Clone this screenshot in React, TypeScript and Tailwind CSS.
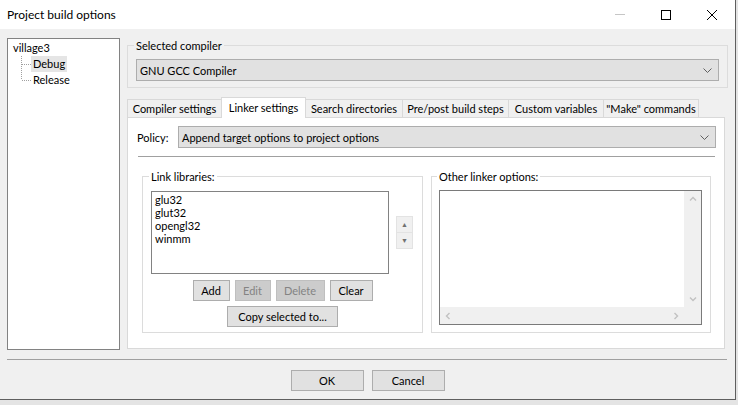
import React from 'react'

const tabs = [
  { label: 'Compiler settings', w: 'w-[95px]' },
  { label: 'Linker settings', w: 'w-[85px]', active: true },
  { label: 'Search directories', w: 'w-[98px]' },
  { label: 'Pre/post build steps', w: 'w-[107px]' },
  { label: 'Custom variables', w: 'w-[96px]' },
  { label: '"Make" commands', w: 'w-[96px]' },
]

const Chevron = () => (
  <svg width="9" height="5" viewBox="0 0 9 5" className="shrink-0">
    <path d="M0.5 0.5 L4.5 4.5 L8.5 0.5" fill="none" stroke="#606060" strokeWidth="1" />
  </svg>
)

const Combo = ({ text }: { text: string }) => (
  <div className="h-[22px] flex-1 flex items-center justify-between bg-[#e1e1e1] border border-[#adadad] pl-[3px] pr-[6px]">
    <span>{text}</span>
    <Chevron />
  </div>
)

const Btn = ({ children, w, disabled }: { children: React.ReactNode; w: string; disabled?: boolean }) => (
  <div
    className={`${w} h-[21px] flex items-center justify-center border whitespace-nowrap ${
      disabled ? 'bg-[#cccccc] border-[#bfbfbf] text-[#838383]' : 'bg-[#e1e1e1] border-[#adadad]'
    }`}
  >
    {children}
  </div>
)

const Arrow = ({ d }: { d: string }) => (
  <svg width="8" height="8" viewBox="0 0 8 8">
    <path d={d} fill="none" stroke="#c2c2c2" strokeWidth="1.4" />
  </svg>
)

export default function App() {
  return (
    <div className="w-[738px] h-[405px] bg-[#e4e4e4] font-['Lato',sans-serif] text-[11px] leading-[15px] text-black overflow-hidden">
      <div className="w-[736px] h-[400px] bg-[#f0f0f0] border-r border-b border-[#5f5f5f] flex flex-col">
        {/* title bar */}
        <div className="h-[29px] bg-white flex items-center justify-between shrink-0">
          <span className="pl-[7px] text-[12px]">Project build options</span>
          <div className="flex h-full">
            <div className="w-[46px] flex items-center justify-center">
              <div className="w-[10px] h-px bg-[#c6c6c6]" />
            </div>
            <div className="w-[46px] flex items-center justify-center">
              <div className="w-[10px] h-[10px] border border-black" />
            </div>
            <div className="w-[46px] flex items-center justify-center">
              <svg width="10" height="10" viewBox="0 0 10 10">
                <path d="M0 0 L10 10 M10 0 L0 10" stroke="#000" strokeWidth="1" />
              </svg>
            </div>
          </div>
        </div>

        {/* body */}
        <div className="flex-1 flex flex-col px-[7px] pt-[9px]">
          <div className="flex gap-[7px]">
            {/* tree */}
            <div className="w-[113px] h-[312px] bg-white border border-[#828282] pt-px pl-[5px] leading-[16px]">
              <div>village3</div>
              <div className="flex ml-[8px]">
                <svg width="10" height="32" viewBox="0 0 10 32" className="shrink-0">
                  <path d="M0.5 0 V24 M1 8.5 H10 M1 24.5 H10" stroke="#a0a0a0" strokeWidth="1" strokeDasharray="1 1" fill="none" />
                </svg>
                <div className="flex flex-col items-start">
                  <div className="px-[2px] bg-[#e5e5e5] h-[16px]">Debug</div>
                  <div className="px-[2px] h-[16px]">Release</div>
                </div>
              </div>
            </div>

            {/* right column */}
            <div className="w-[601px] flex flex-col">
              <fieldset className="border border-[#dcdcdc] px-[8px] pb-[6px] min-w-0">
                <legend className="px-[2px] -ml-[2px]">Selected compiler</legend>
                <div className="mt-[6px] flex">
                  <Combo text="GNU GCC Compiler" />
                </div>
              </fieldset>

              <div className="mt-[9px] h-[20px] flex items-end">
                {tabs.map((t, i) => (
                  <div
                    key={t.label}
                    className={`${t.w} ${i > 0 ? '-ml-px' : ''} flex items-center justify-center whitespace-nowrap border-t border-l border-r border-[#d9d9d9] ${
                      t.active ? 'h-[21px] bg-white relative z-10 -mb-px pb-[2px]' : 'h-[18px] bg-[#f0f0f0]'
                    }`}
                  >
                    {t.label}
                  </div>
                ))}
              </div>

              <div className="w-[598px] h-[232px] bg-white border border-[#d9d9d9] flex flex-col">
                <div className="mt-[8px] pl-[9px] pr-[8px] flex items-center">
                  <span className="w-[41px]">Policy:</span>
                  <Combo text="Append target options to project options" />
                </div>
                <div className="mt-[8px] ml-[10px] mr-[9px] border-t border-[#a0a0a0]" />

                <div className="mt-[12px] ml-[14px] flex gap-[8px]">
                  <fieldset className="w-[281px] h-[164px] border border-[#dcdcdc] px-[8px] min-w-0">
                    <legend className="px-[2px] -ml-[2px]">Link libraries:</legend>
                    <div className="mt-[7px] flex items-center gap-[7px]">
                      <div className="w-[238px] h-[83px] bg-white border border-[#828282] pl-[3px] pt-[1px] leading-[13px]">
                        <div>glu32</div>
                        <div>glut32</div>
                        <div>opengl32</div>
                        <div>winmm</div>
                      </div>
                      <div className="flex flex-col">
                        <div className="w-[17px] h-[17px] bg-[#f0f0f0] border border-[#e3e3e3] flex items-center justify-center text-[7px] leading-none text-[#707070]">▲</div>
                        <div className="w-[17px] h-[17px] -mt-px bg-[#f0f0f0] border border-[#e3e3e3] flex items-center justify-center text-[7px] leading-none text-[#707070]">▼</div>
                      </div>
                    </div>
                    <div className="mt-[6px] flex justify-center gap-[5px]">
                      <Btn w="w-[37px]">Add</Btn>
                      <Btn w="w-[36px]" disabled>Edit</Btn>
                      <Btn w="w-[49px]" disabled>Delete</Btn>
                      <Btn w="w-[43px]">Clear</Btn>
                    </div>
                    <div className="mt-[5px] flex justify-center">
                      <Btn w="w-[111px]">Copy selected to...</Btn>
                    </div>
                  </fieldset>

                  <fieldset className="w-[280px] h-[164px] border border-[#dcdcdc] pl-[7px] min-w-0">
                    <legend className="px-[2px] -ml-[2px]">Other linker options:</legend>
                    <div className="mt-[6px] w-[263px] h-[135px] border border-[#7a7a7a] bg-white grid grid-cols-[1fr_17px] grid-rows-[1fr_17px]">
                      <div />
                      <div className="bg-[#f0f0f0] flex flex-col items-center justify-between py-[4px]">
                        <Arrow d="M1 5.5 L4 2.5 L7 5.5" />
                        <Arrow d="M1 2.5 L4 5.5 L7 2.5" />
                      </div>
                      <div className="bg-[#f0f0f0] flex items-center justify-between px-[4px]">
                        <Arrow d="M5.5 1 L2.5 4 L5.5 7" />
                        <Arrow d="M2.5 1 L5.5 4 L2.5 7" />
                      </div>
                      <div className="bg-[#f0f0f0]" />
                    </div>
                  </fieldset>
                </div>
              </div>
            </div>
          </div>

          <div className="mt-[9px] w-[720px] border-t border-[#a0a0a0]" />
          <div className="mt-[10px] flex justify-center gap-[8px]">
            <Btn w="w-[73px]">OK</Btn>
            <Btn w="w-[73px]">Cancel</Btn>
          </div>
        </div>
      </div>
    </div>
  )
}
